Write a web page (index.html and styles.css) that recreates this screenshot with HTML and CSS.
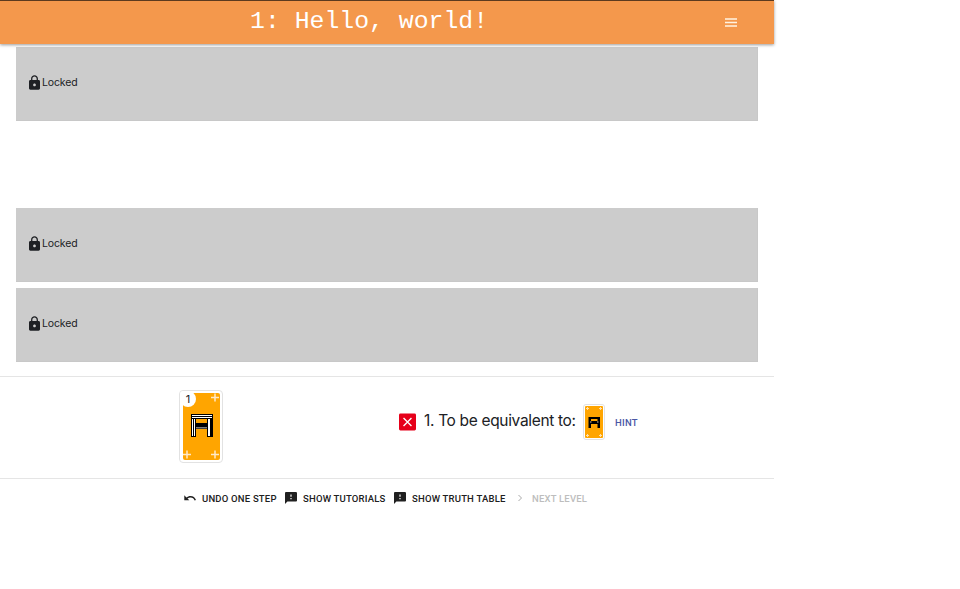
FILE: index.html
```
<!DOCTYPE html>
<html lang="en">
<head>
<meta charset="utf-8">
<title>1: Hello, world!</title>
<link rel="stylesheet" href="styles.css">
</head>
<body>
<svg class="defs" width="0" height="0">
  <symbol id="lock" viewBox="4 1 16 21"><path fill-rule="evenodd" d="M18 8h-1V6c0-2.760-2.240-5-5-5S7 3.240 7 6v2H6c-1.100 0-2 .9-2 2v10c0 1.100.9 2 2 2h12c1.100 0 2-.9 2-2V10c0-1.100-.9-2-2-2zm-6 9c-1.100 0-2-.9-2-2s.9-2 2-2 2 .9 2 2-.9 2-2 2zm3.100-9H8.900V6c0-1.710 1.390-3.100 3.100-3.100s3.100 1.390 3.100 3.100z"/></symbol>
  <symbol id="feedback" viewBox="2 2 20 20"><path d="M20 2H4c-1.100 0-1.990.9-1.990 2L2 22l4-4h14c1.100 0 2-.9 2-2V4c0-1.100-.9-2-2-2zm-7 12h-2v-2h2v2zm0-4h-2V6h2v4z"/></symbol>
</svg>
<div class="app">
  <header class="bar">
    <h1 class="title">1: Hello, world!</h1>
    <svg class="menu" viewBox="0 0 12 9"><path d="M0 .9h12M0 4.500h12M0 8.100h12"/></svg>
  </header>
  <main class="zones">
    <section class="zone"><svg class="lock"><use href="#lock"/></svg><span>Locked</span></section>
    <section class="zone open"></section>
    <section class="zone"><svg class="lock"><use href="#lock"/></svg><span>Locked</span></section>
    <section class="zone"><svg class="lock"><use href="#lock"/></svg><span>Locked</span></section>
  </main>
  <section class="play">
    <div class="card">
      <svg class="face" viewBox="0 0 37 67">
        <path class="plus" d="M28 4.500h8M32 .5v8M0 61.500h8M4 57.500v8M28 61.500h8M32 57.500v8"/>
        <path class="ink" fill-rule="evenodd" d="M8 21h22v23h-6v-8H13v8H8zM13 26v4h11v-4z"/>
        <path class="light" d="M9 22h20v1H9zM9 24h20v1H9zM9 26h1v17H9zM11 26h1v17h-1zM25 26h2v17h-2zM13 34.500h11v.8H13z"/>
      </svg>
      <span class="count">1</span>
    </div>
    <div class="goal">
      <svg class="cross" viewBox="0 0 18 18"><rect width="18" height="18" rx="1.500"/><path d="M4.800 4.800l8.400 8.400M13.200 4.800l-8.400 8.400"/></svg>
      <span class="goal-text">1. To be equivalent to:</span>
      <div class="mini">
        <svg class="mini-face" viewBox="0 0 18 32">
          <path class="mini-plus" d="M1 2.500h3M2.500 1v3M14 2.500h3M15.500 1v3M1 29.500h3M2.500 28v3M14 29.500h3M15.500 28v3"/>
          <path fill-rule="evenodd" d="M3.500 11H15v11h-2.500v-4H6v4H3.500zM6 13v2h6.500v-2z"/>
          <path class="mini-hole" d="M5 15.500h1.500v1H5zM12 15.500h1.500v1H12z"/>
        </svg>
      </div>
      <span class="hint">HINT</span>
    </div>
  </section>
  <footer class="actions">
    <span class="action undo"><svg class="icon" viewBox="0 0 12 12"><path d="M.3 3.200v5h5L3.500 6.500C4.400 5.800 5.500 5.400 6.500 5.400c2 0 3.500 1.200 4.100 3.100l1.400-.5C11.200 5.500 9.200 3.900 6.500 3.900c-1.600 0-3 .6-4.100 1.500z"/></svg><span>UNDO ONE STEP</span></span>
    <span class="action tutorials"><svg class="icon"><use href="#feedback"/></svg><span>SHOW TUTORIALS</span></span>
    <span class="action table"><svg class="icon"><use href="#feedback"/></svg><span>SHOW TRUTH TABLE</span></span>
    <span class="action next"><svg class="icon" viewBox="0 0 12 12"><path class="chevron" d="M4.500 3l3 3-3 3"/></svg><span>NEXT LEVEL</span></span>
  </footer>
</div>
</body>
</html>
```
FILE: styles.css
```
* { box-sizing: border-box; }
body { margin: 0; background: #fff; color: #202124; font-family: Inter, sans-serif; }
svg { display: block; flex: none; }
.defs { position: absolute; }
.app { width: 774px; white-space: nowrap; }

.bar {
  position: relative;
  display: flex;
  align-items: center;
  height: 44px;
  padding-left: 250px;
  border-top: 1px solid #5c3a1e;
  background: #f4984c;
  box-shadow: 0 1px 3px rgba(0, 0, 0, .4);
}
.title { margin: 0; width: 475px; color: #fff; font: 400 24.800px/40px "Liberation Mono", monospace; padding-bottom: 3px; }
.menu { width: 12px; height: 9px; stroke: #fff3e2; stroke-width: 1.500; }

.zones { display: grid; grid-template-rows: repeat(4, 74px); row-gap: 6.300px; padding: 3px 16px 0 15.500px; }
.zone { display: flex; align-items: center; padding: 0 0 3px 13px; background: #ccc; border: 1px solid #c8c8c8; border-width: 0 1px 1px 0; font-size: 10.500px; line-height: 14px; letter-spacing: -.15px; }
.zone span { padding-top: 2px; }
.zone.open { visibility: hidden; }
.lock { width: 11px; height: 15px; margin: 1px 2.500px 0 0; fill: #1e2024; }

.play { display: flex; height: 103px; margin-top: 14px; border-top: 1px solid #e5e5e5; border-bottom: 1px solid #e5e5e5; }
.card { position: relative; width: 44px; height: 73px; margin: 13px 0 0 179px; padding: 2px 3px 3px; border: 1px solid #e2e2e2; border-radius: 4px; background: #fff; }
.face { width: 37px; height: 67px; background: #ffa500; border-radius: 2px; }
.plus { stroke: #ffe9c8; stroke-width: 1.500; }
.ink { fill: #000; }
.light { fill: #fff; }
.count { position: absolute; left: 0; top: 0; width: 16px; height: 16px; border-radius: 4px 8px 8px 8px; background: #fff; font-size: 11px; line-height: 16px; text-align: center; }
.goal { display: flex; align-items: center; height: 36px; margin: 27px 0 0 176px; }
.cross { width: 17px; height: 18px; fill: #e6001a; }
.cross path { stroke: #fff; stroke-width: 1.400; }
.goal-text { width: 159px; margin-left: 8px; padding-bottom: 1px; font-size: 15.500px; line-height: 20px; letter-spacing: -.33px; }
.mini { width: 22px; height: 36px; padding: 1px; border: 1px solid #e2e2e2; border-radius: 3px; background: #fff; }
.mini-face { width: 18px; height: 32px; background: #ffa500; border-radius: 1px; }
.mini-plus { stroke: #ffe0ad; stroke-width: 1; }
.mini-hole { fill: #d8c8ac; }
.hint { margin-left: 10px; padding-top: 3px; color: #4a57a5; font: 500 9.500px/14px Roboto, sans-serif; letter-spacing: .25px; }

.actions { display: flex; align-items: center; height: 38px; padding-left: 184px; color: #202020; font: 500 9.500px/14px Roboto, sans-serif; letter-spacing: .2px; }
.action { display: flex; align-items: center; gap: 6px; }
.action span { padding-top: 2px; }
.icon { width: 12px; height: 12px; fill: currentColor; }
.undo { width: 101px; }
.tutorials { width: 109px; }
.table { width: 120px; }
.next { color: #bdbdbd; }
.chevron { fill: none; stroke: #aaa; stroke-width: 1; }
```
